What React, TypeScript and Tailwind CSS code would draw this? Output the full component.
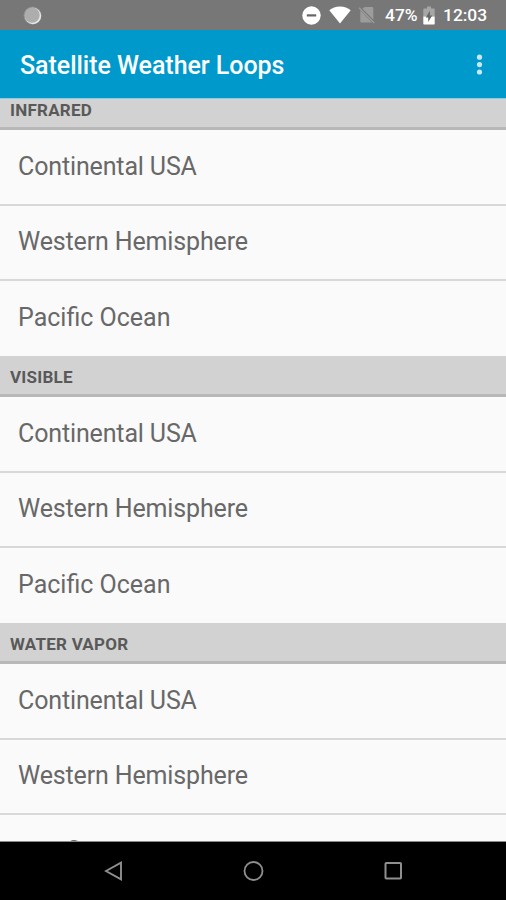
const sections = [
  { title: "Infrared", items: ["Continental USA", "Western Hemisphere", "Pacific Ocean"] },
  { title: "Visible", items: ["Continental USA", "Western Hemisphere", "Pacific Ocean"] },
  { title: "Water Vapor", items: ["Continental USA", "Western Hemisphere", "Pacific Ocean"] },
];

const StatusBar = () => (
  <div className="flex h-[30px] shrink-0 items-center bg-[#777777] pl-[23px] pr-[19px] text-white">
    <svg width="19" height="19" viewBox="0 0 19 19">
      <circle cx="9.5" cy="9.5" r="9" fill="#8f8f8f" />
      <circle cx="10" cy="10" r="8.2" fill="#e6e6e6" />
      <circle cx="9.1" cy="9.1" r="7.6" fill="#adadad" />
    </svg>
    <div className="ml-auto flex items-center">
      {/* Do not disturb */}
      <svg className="mr-px" width="19" height="19" viewBox="0 0 19 19">
        <circle cx="9.5" cy="9.5" r="9.2" fill="#fff" />
        <rect x="4.8" y="8.3" width="9.4" height="2.2" fill="#666" />
      </svg>
      {/* Wifi */}
      <svg className="ml-[7px]" width="22" height="18" viewBox="0 0 22 18">
        <path d="M11 17.6 L0.3 4.2 C3 1.9 6.8 0.5 11 0.5 C15.2 0.5 19 1.9 21.7 4.2 Z" fill="#fff" />
      </svg>
      {/* No SIM */}
      <svg className="ml-[7px]" width="18" height="18" viewBox="0 0 18 18">
        <path d="M6.5 1 H14 Q15.3 1 15.3 2.3 V13.6 L4.4 2.8 Z" fill="#9c9c9c" />
        <path d="M2.3 4.6 V15.2 Q2.3 16.5 3.6 16.5 H14 Z" fill="#9c9c9c" />
        <path d="M1 1.8 L16.2 17" stroke="#9c9c9c" strokeWidth="1.3" />
      </svg>
      <span className="ml-[9px] mt-[2px] w-[34px] whitespace-nowrap text-[17.4px] font-medium leading-none">47%</span>
      {/* Battery charging */}
      <svg className="ml-1" width="12" height="19" viewBox="0 0 12 19">
        <path d="M4 0.5 H8 V2.5 H11 Q11.7 2.5 11.7 3.3 V10.5 H0.3 V3.3 Q0.3 2.5 1 2.5 H4 Z" fill="#a6a6a6" />
        <path d="M0.3 10.5 H11.7 V17.7 Q11.7 18.5 11 18.5 H1 Q0.3 18.5 0.3 17.7 Z" fill="#fff" />
        <path d="M6.9 4.8 L2.8 11.6 H5.2 V16 L9.2 9.4 H6.9 Z" fill="#666" />
      </svg>
      <span className="ml-2 mt-[2px] w-[44px] whitespace-nowrap text-[17.4px] font-medium leading-none">12:03</span>
    </div>
  </div>
);

const AppBar = () => (
  <div className="flex h-[69px] shrink-0 items-center justify-between border-b border-[#8ccbe4] bg-[#0099cc] pl-5 pr-[22px] pt-[2px] text-white">
    <h1 className="text-[25px] font-medium leading-none tracking-[-0.04px]">Satellite Weather Loops</h1>
    <svg width="9" height="22" viewBox="0 0 9 22" fill="#c9e8f5">
      <circle cx="4.5" cy="3.2" r="2.6" />
      <circle cx="4.5" cy="10.6" r="2.6" />
      <circle cx="4.5" cy="18" r="2.6" />
    </svg>
  </div>
);

const NavBar = () => (
  <div className="flex h-[58px] shrink-0 items-center justify-between bg-black pl-[104px] pr-[102px]">
    <svg width="20" height="22" viewBox="0 0 20 22" fill="none" stroke="#8f8f8f" strokeWidth="1.9">
      <path d="M2 11 L17 2.6 V19.4 Z" />
    </svg>
    <svg width="22" height="22" viewBox="0 0 22 22" fill="none" stroke="#8f8f8f" strokeWidth="1.8">
      <circle cx="11.5" cy="11" r="9" />
    </svg>
    <svg width="22" height="22" viewBox="0 0 22 22" fill="none" stroke="#8f8f8f" strokeWidth="2">
      <rect x="3.5" y="3" width="15.5" height="15.5" rx="0.8" />
    </svg>
  </div>
);

const App = () => {
  return (
    <div className="flex h-[900px] w-[506px] flex-col overflow-hidden bg-[#fafafa] font-['Roboto',sans-serif]">
      <StatusBar />
      <AppBar />

      {/* List, scrolled down a little */}
      <div className="min-h-0 flex-1 overflow-hidden border-b border-[#8a8a8a]">
        <div className="-mt-[10px]">
          {sections.map((section) => (
            <section key={section.title}>
              <h2 className="flex h-[41px] items-center border-b-[3px] border-[#b8b8b8] bg-[#d2d2d2] pl-[10px] pt-[5px] text-[17px] font-bold uppercase leading-none tracking-[0.25px] text-[#595959]">
                {section.title}
              </h2>
              <ul>
                {section.items.map((item) => (
                  <li key={item} className="flex h-[75.5px] items-center border-b-2 border-[#d8d8d8] pb-px pl-[18px] text-[25px] leading-none tracking-[-0.14px] text-[#686868] last:h-[75px] last:border-b-0 last:pb-[3px] last:tracking-normal">
                    {item}
                  </li>
                ))}
              </ul>
            </section>
          ))}
        </div>
      </div>

      <NavBar />
    </div>
  );
};

export default App;
